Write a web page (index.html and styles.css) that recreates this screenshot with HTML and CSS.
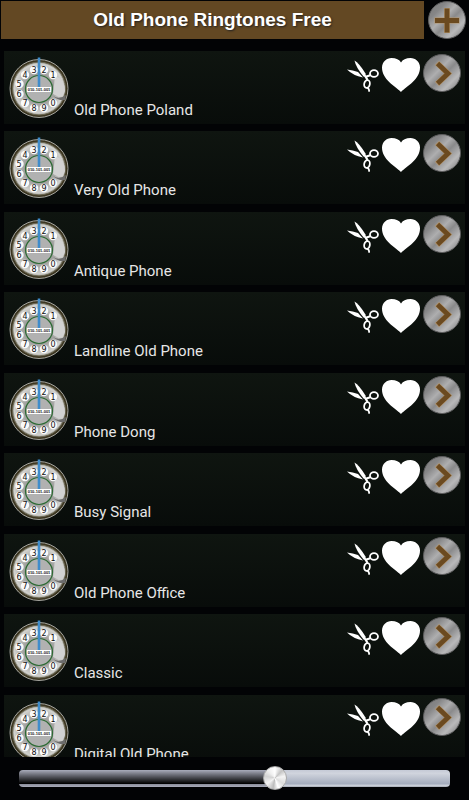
FILE: index.html
```
<!DOCTYPE html>
<html lang="en">
  <head>
    <meta charset="UTF-8">
    <meta name="viewport" content="width=device-width, initial-scale=1">
    <title>Old Phone Ringtones Free</title>
    <link rel="stylesheet" href="styles.css">
  </head>
  <body>
    <!-- shared icons -->
    <svg class="sprite" aria-hidden="true">
      <defs>
        <radialGradient id="dial-face">
          <stop offset="0.5" stop-color="#989896"/>
          <stop offset="0.75" stop-color="#b9b9b6"/>
          <stop offset="0.93" stop-color="#d2d2ce"/>
          <stop offset="1" stop-color="#8b8b82"/>
        </radialGradient>
        <linearGradient id="metal" x1="0" y1="0" x2="1" y2="1">
          <stop offset="0" stop-color="#777778"/>
          <stop offset="0.25" stop-color="#868687"/>
          <stop offset="0.42" stop-color="#aeaeaf"/>
          <stop offset="0.55" stop-color="#8a8a8b"/>
          <stop offset="0.75" stop-color="#b9b9ba"/>
          <stop offset="1" stop-color="#6a6a6b"/>
        </linearGradient>
        <symbol id="dial" viewBox="0 0 60 62">
          <circle cx="30" cy="31.500" r="29" fill="#3b3520" stroke="#a5a59f" stroke-width="1"/>
          <circle cx="30" cy="31.500" r="26.500" fill="url(#dial-face)" stroke="#6b6650" stroke-width="1"/>
          <path d="M46 19Q56 22 56 34Q55 39 50 40L44 37Z" fill="#d2d2d2"/>
          <path d="M44 39Q50 43 57 38L56 43Q49 44 44 39Z" fill="#6c6c6c"/>
          <g fill="#fafafa">
            <circle cx="44" cy="18" r="4.200"/>
            <circle cx="35" cy="13" r="4.200"/>
            <circle cx="25" cy="13" r="4.200"/>
            <circle cx="16" cy="18" r="4.200"/>
            <circle cx="10.500" cy="27" r="4.200"/>
            <circle cx="10.500" cy="37" r="4.200"/>
            <circle cx="16" cy="46" r="4.200"/>
            <circle cx="25" cy="51" r="4.200"/>
            <circle cx="35" cy="51" r="4.200"/>
            <circle cx="44" cy="46" r="4.200"/>
          </g>
          <g class="dial-digits">
            <text x="44" y="21">1</text>
            <text x="35" y="16">2</text>
            <text x="25" y="16">3</text>
            <text x="16" y="21">4</text>
            <text x="10" y="30">5</text>
            <text x="10" y="40">6</text>
            <text x="16" y="49">7</text>
            <text x="25" y="54">8</text>
            <text x="35" y="54">9</text>
            <text x="44" y="49">0</text>
          </g>
          <circle cx="30" cy="32" r="13.500" fill="#b1b1b1" stroke="#2c6b33" stroke-width="1.200"/>
          <rect x="18" y="30" width="24" height="5" fill="#fff"/>
          <text class="dial-label" x="30" y="34">010-101-001</text>
          <path d="M30 0.500V30" stroke="#3f8ccb" stroke-width="2.600"/>
        </symbol>
        <symbol id="scissors" viewBox="0 0 32 34">
          <path d="M7.500 2.500Q12 5 18.500 15.500L19 19L16.500 18.500Q9 9.500 7.500 2.500Z" fill="#fff"/>
          <path d="M0 11.500Q6 12 11 14L16 19.500Q6 17.500 0 11.500Z" fill="#fff"/>
          <g fill="none" stroke="#fff" stroke-linecap="round">
            <path d="M18.500 18.500L20 21M19.500 18.500L22.500 17.500" stroke-width="2.200"/>
            <ellipse cx="27" cy="15.500" rx="4" ry="3.400" stroke-width="1.800"/>
            <ellipse cx="20" cy="26" rx="2.800" ry="3.900" stroke-width="1.800" transform="rotate(12 20 26)"/>
            <path d="M20.500 30Q22.500 31 22 33" stroke-width="1.800"/>
          </g>
        </symbol>
        <symbol id="heart" viewBox="0 0 38 34">
          <path d="M19 34C13 28 0 21.500 0 9.500C0 4 4.500 0 9.500 0C14 0 17.500 1.500 19 4.500C20.500 1.500 24 0 28.500 0C33.500 0 38 4 38 9.500C38 21.500 25 28 19 34Z" fill="#fff"/>
        </symbol>
        <symbol id="next" viewBox="0 0 38 38">
          <circle cx="19" cy="19" r="18.500" fill="url(#metal)" stroke="#5d5d5e" stroke-width="1"/>
          <path d="M14 9L25 19.500L14 30" fill="none" stroke="#b3946a" stroke-width="5.800"/>
          <path d="M14.500 9.500L25 19.500L14.500 29.500" fill="none" stroke="#6b4a20" stroke-width="4.800"/>
        </symbol>
        <symbol id="plus" viewBox="0 0 38 38">
          <circle cx="19" cy="19" r="18.500" fill="url(#metal)" stroke="#5d5d5e" stroke-width="1"/>
          <path d="M19 7V32M6.500 19.500H31.500" fill="none" stroke="#b3946a" stroke-width="5.800"/>
          <path d="M19 7.500V31.500M7 19.500H31" fill="none" stroke="#6b4a20" stroke-width="4.800"/>
        </symbol>
      </defs>
    </svg>

    <header class="header">
      <h1 class="title">Old Phone Ringtones Free</h1>
      <button class="btn btn--round" type="button" aria-label="More"><svg><use href="#plus"/></svg></button>
    </header>

    <main class="list-wrap">
      <ul class="list">
        <li class="tone">
          <svg class="dial"><use href="#dial"/></svg>
          <span class="tone-name">Old Phone Poland</span>
          <div class="actions">
            <button class="btn btn--cut" type="button" aria-label="Cut"><svg><use href="#scissors"/></svg></button>
            <button class="btn btn--heart" type="button" aria-label="Favorite"><svg><use href="#heart"/></svg></button>
            <button class="btn btn--round" type="button" aria-label="Open"><svg><use href="#next"/></svg></button>
          </div>
        </li>
        <li class="tone">
          <svg class="dial"><use href="#dial"/></svg>
          <span class="tone-name">Very Old Phone</span>
          <div class="actions">
            <button class="btn btn--cut" type="button" aria-label="Cut"><svg><use href="#scissors"/></svg></button>
            <button class="btn btn--heart" type="button" aria-label="Favorite"><svg><use href="#heart"/></svg></button>
            <button class="btn btn--round" type="button" aria-label="Open"><svg><use href="#next"/></svg></button>
          </div>
        </li>
        <li class="tone">
          <svg class="dial"><use href="#dial"/></svg>
          <span class="tone-name">Antique Phone</span>
          <div class="actions">
            <button class="btn btn--cut" type="button" aria-label="Cut"><svg><use href="#scissors"/></svg></button>
            <button class="btn btn--heart" type="button" aria-label="Favorite"><svg><use href="#heart"/></svg></button>
            <button class="btn btn--round" type="button" aria-label="Open"><svg><use href="#next"/></svg></button>
          </div>
        </li>
        <li class="tone">
          <svg class="dial"><use href="#dial"/></svg>
          <span class="tone-name">Landline Old Phone</span>
          <div class="actions">
            <button class="btn btn--cut" type="button" aria-label="Cut"><svg><use href="#scissors"/></svg></button>
            <button class="btn btn--heart" type="button" aria-label="Favorite"><svg><use href="#heart"/></svg></button>
            <button class="btn btn--round" type="button" aria-label="Open"><svg><use href="#next"/></svg></button>
          </div>
        </li>
        <li class="tone">
          <svg class="dial"><use href="#dial"/></svg>
          <span class="tone-name">Phone Dong</span>
          <div class="actions">
            <button class="btn btn--cut" type="button" aria-label="Cut"><svg><use href="#scissors"/></svg></button>
            <button class="btn btn--heart" type="button" aria-label="Favorite"><svg><use href="#heart"/></svg></button>
            <button class="btn btn--round" type="button" aria-label="Open"><svg><use href="#next"/></svg></button>
          </div>
        </li>
        <li class="tone">
          <svg class="dial"><use href="#dial"/></svg>
          <span class="tone-name">Busy Signal</span>
          <div class="actions">
            <button class="btn btn--cut" type="button" aria-label="Cut"><svg><use href="#scissors"/></svg></button>
            <button class="btn btn--heart" type="button" aria-label="Favorite"><svg><use href="#heart"/></svg></button>
            <button class="btn btn--round" type="button" aria-label="Open"><svg><use href="#next"/></svg></button>
          </div>
        </li>
        <li class="tone">
          <svg class="dial"><use href="#dial"/></svg>
          <span class="tone-name">Old Phone Office</span>
          <div class="actions">
            <button class="btn btn--cut" type="button" aria-label="Cut"><svg><use href="#scissors"/></svg></button>
            <button class="btn btn--heart" type="button" aria-label="Favorite"><svg><use href="#heart"/></svg></button>
            <button class="btn btn--round" type="button" aria-label="Open"><svg><use href="#next"/></svg></button>
          </div>
        </li>
        <li class="tone">
          <svg class="dial"><use href="#dial"/></svg>
          <span class="tone-name">Classic</span>
          <div class="actions">
            <button class="btn btn--cut" type="button" aria-label="Cut"><svg><use href="#scissors"/></svg></button>
            <button class="btn btn--heart" type="button" aria-label="Favorite"><svg><use href="#heart"/></svg></button>
            <button class="btn btn--round" type="button" aria-label="Open"><svg><use href="#next"/></svg></button>
          </div>
        </li>
        <li class="tone">
          <svg class="dial"><use href="#dial"/></svg>
          <span class="tone-name">Digital Old Phone</span>
          <div class="actions">
            <button class="btn btn--cut" type="button" aria-label="Cut"><svg><use href="#scissors"/></svg></button>
            <button class="btn btn--heart" type="button" aria-label="Favorite"><svg><use href="#heart"/></svg></button>
            <button class="btn btn--round" type="button" aria-label="Open"><svg><use href="#next"/></svg></button>
          </div>
        </li>
      </ul>
    </main>

    <footer class="footer">
      <input class="volume" type="range" min="0" max="100" value="60" aria-label="Volume">
    </footer>
  </body>
</html>
```
FILE: styles.css
```
* {
  box-sizing: border-box;
}

body {
  margin: 0;
  display: flex;
  flex-direction: column;
  height: 100vh;
  background: #020305;
  color: #e6e6e6;
  font-family: Roboto, "Liberation Sans", sans-serif;
}

.sprite {
  position: absolute;
  width: 0;
  height: 0;
}

.header {
  display: flex;
  align-items: center;
  gap: 4px;
  flex: none;
  height: 40px;
  padding: 0 3px 0 1px;
}

.title {
  flex: 1;
  margin: 0;
  background: #634823;
  color: #fff;
  font-family: "Liberation Sans", Arial, sans-serif;
  font-size: 19px;
  line-height: 38px;
  font-weight: bold;
  text-align: center;
  text-shadow: 1px 1px 2px #222;
}

.btn {
  display: block;
  flex: none;
  padding: 0;
  border: 0;
  background: none;
  cursor: pointer;
}

.btn svg {
  display: block;
  width: 100%;
  height: 100%;
}

.btn--round {
  width: 38px;
  height: 38px;
}

.btn--cut {
  width: 32px;
  height: 34px;
}

.btn--heart {
  width: 38px;
  height: 34px;
}

.list-wrap {
  flex: 1;
  min-height: 0;
  margin-top: 11px;
  overflow: hidden;
}

.list {
  margin: 0;
  padding: 0 4px;
  list-style: none;
}

.tone {
  display: flex;
  gap: 5px;
  height: 73px;
  margin-bottom: 7px;
  padding: 3px 4px 4px 5px;
  background: linear-gradient(#0f1510, #080c0a);
}

.tone:nth-child(even) {
  margin-bottom: 8px;
}

.dial {
  flex: none;
  width: 60px;
  height: 62px;
  margin-top: 3px;
}

.dial-digits {
  fill: #111;
  font: 8px "DejaVu Sans", sans-serif;
  text-anchor: middle;
}

.dial-label {
  fill: #111;
  font: bold 4px "Liberation Sans", sans-serif;
  text-anchor: middle;
}

.tone-name {
  flex: 1;
  align-self: flex-end;
  font-size: 15px;
  line-height: 20px;
}

.actions {
  display: flex;
  gap: 3px;
  align-items: flex-end;
  align-self: flex-start;
}

.footer {
  display: flex;
  align-items: center;
  flex: none;
  height: 43px;
  padding: 0 19px;
}

.volume {
  -webkit-appearance: none;
  appearance: none;
  width: 100%;
  height: 24px;
  margin: 0;
  background: none;
}

.volume::-webkit-slider-runnable-track {
  height: 17px;
  border-radius: 4px;
  background:
    linear-gradient(#a9acbb, #73757f 25%, #292a2d 60%, #000 80%, #888b98 82%, #a9acba) left / 60% 100% no-repeat,
    linear-gradient(#c5cad6, #d0d4dd 20%, #a4acbd 82%, #ced3dd 90%, #a5aab5);
}

.volume::-webkit-slider-thumb {
  -webkit-appearance: none;
  width: 24px;
  height: 24px;
  margin-top: -4px;
  border: 1px solid #aaa;
  border-radius: 50%;
  background: conic-gradient(#fff, #c4c4c4 12%, #f4f4f4 22%, #dcdcdc 35%, #fff 45%, #bcbcbc 53%, #f4f4f4 65%, #d2d2d2 78%, #eee 88%, #fff);
}
```
